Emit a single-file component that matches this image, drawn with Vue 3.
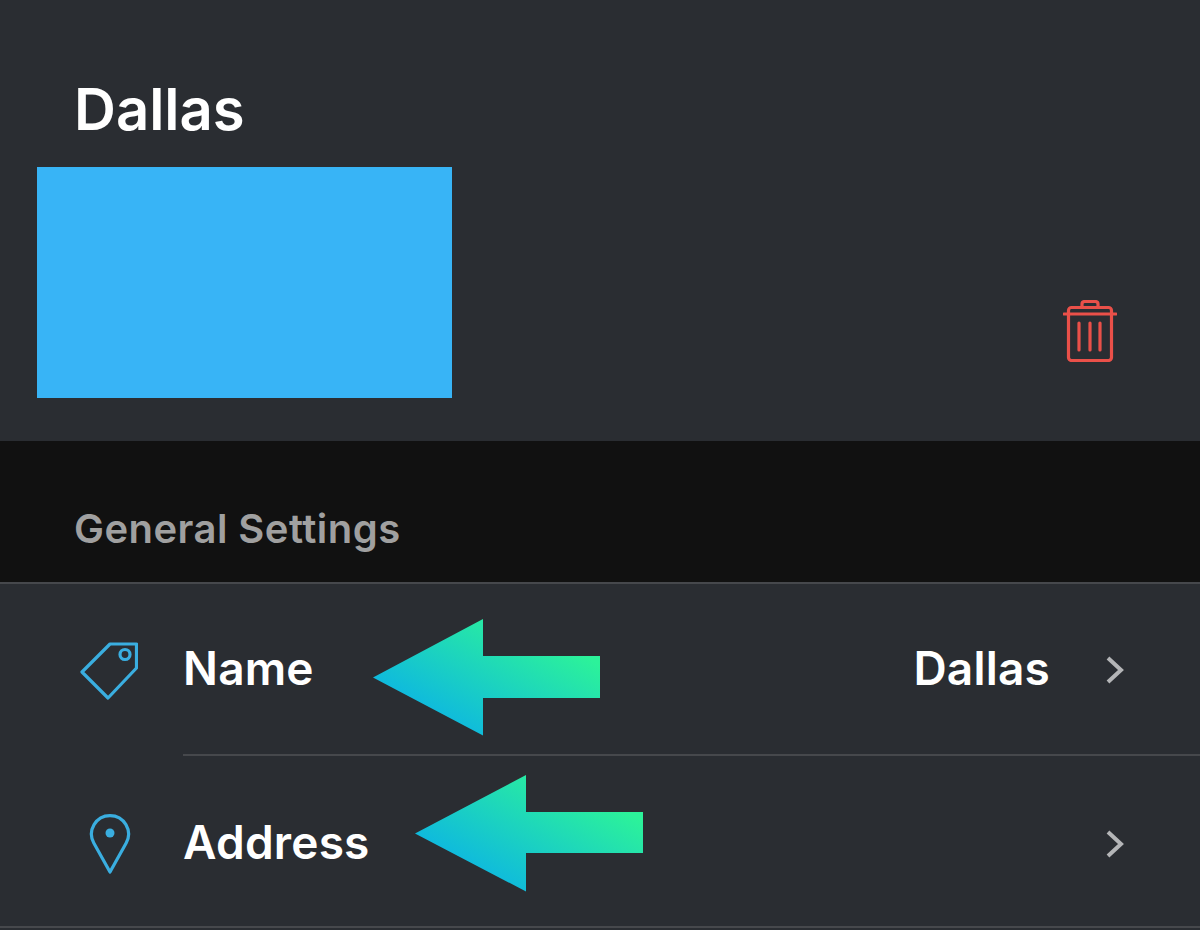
<script setup>
const rows = [
  { label: 'Name', value: 'Dallas', icon: 'tag' },
  { label: 'Address', value: '', icon: 'pin' },
]
</script>

<template>
  <div class="page">
    <header class="head">
      <h1 class="title">Dallas</h1>
      <div class="head-row">
        <div class="redact"></div>
        <svg class="trash" width="54" height="62" viewBox="0 0 54 62" fill="none" stroke="#ea5049" stroke-width="3.200" stroke-linecap="round" stroke-linejoin="round">
          <path d="M1 14H53" />
          <path d="M19 7V4Q19 1.500 22 1.500H32Q35 1.500 35 4V7" />
          <rect x="5.500" y="7.500" width="43" height="53" rx="3" />
          <path d="M16 23V50M27 23V50M37 23V50" />
        </svg>
      </div>
    </header>

    <div class="section-title">General Settings</div>

    <div class="list">
      <div v-for="row in rows" :key="row.label" class="row">
        <div class="icon-cell">
          <svg v-if="row.icon === 'tag'" width="58" height="58" viewBox="0 0 58 58" fill="none" stroke="#3aaee0" stroke-width="3.200" stroke-linejoin="round">
            <path d="M30 2H56.500V26L28 56L2 30Z" />
            <circle cx="45" cy="12.500" r="5" />
          </svg>
          <svg v-else width="42" height="62" viewBox="0 0 42 62" fill="none">
            <path d="M21 59L4.800 30A18.500 18.500 0 1 1 37.200 30Z" stroke="#3aaee0" stroke-width="3.200" stroke-linejoin="round" />
            <circle cx="21" cy="20" r="4.500" fill="#3aaee0" />
          </svg>
        </div>
        <div class="row-body">
          <span class="label">{{ row.label }}</span>
          <span class="value">{{ row.value }}</span>
          <svg class="chev" width="18" height="28" viewBox="0 0 18 28" fill="none" stroke="#b4b5b7" stroke-width="4">
            <path d="M2 2L15 14L2 26" />
          </svg>
        </div>
      </div>
    </div>

    <svg class="arrow arrow-a" width="228" height="117" viewBox="0 0 228 117">
      <defs>
        <linearGradient id="ga" gradientUnits="userSpaceOnUse" x1="200" y1="30" x2="130" y2="150">
          <stop offset="0" stop-color="#2cf29a" />
          <stop offset="1" stop-color="#0cb4e4" />
        </linearGradient>
      </defs>
      <path d="M0 58.500L110 0V37H227V79H110V116.500Z" fill="url(#ga)" />
    </svg>
    <svg class="arrow arrow-b" width="228" height="117" viewBox="0 0 228 117">
      <path d="M0 58.500L111 0V37H228V78H111V116.500Z" fill="url(#ga)" />
    </svg>
  </div>
</template>

<style>
html, body { margin: 0; background: #2a2d32; }
</style>

<style scoped>
.page {
  position: relative;
  width: 1200px;
  height: 930px;
  overflow: hidden;
  background: #2a2d32;
  font-family: Inter, "Noto Sans", sans-serif;
  color: #fff;
}
.head {
  height: 441px;
  box-sizing: border-box;
  padding: 72px 83px 0 37px;
}
.title {
  margin: 0 0 0 37px;
  height: 95px;
  font-size: 58px;
  line-height: 75px;
  font-weight: 600;
}
.head-row {
  display: flex;
  justify-content: space-between;
}
.redact {
  width: 415px;
  height: 231px;
  background: #38b4f6;
}
.trash { margin-top: 133px; }
.section-title {
  height: 143px;
  box-sizing: border-box;
  padding: 65px 0 0 74px;
  background: #111;
  color: #a0a0a0;
  font-size: 40px;
  line-height: 46px;
  font-weight: 600;
  letter-spacing: 0.45px;
  border-bottom: 2px solid #46484c;
}
.list { border-bottom: 2px solid #46484c; }
.row {
  display: flex;
  height: 172px;
  box-sizing: border-box;
  padding-top: 2px;
}
.row:last-child { height: 170px; padding-top: 6px; }
.icon-cell {
  width: 183px;
  flex: none;
  display: flex;
  align-items: center;
  padding-left: 80px;
  box-sizing: border-box;
}
.row:last-child .icon-cell { padding-left: 89px; }
.row-body {
  flex: 1;
  display: flex;
  align-items: center;
  padding-right: 76px;
  border-bottom: 2px solid #46484c;
  font-size: 46px;
  font-weight: 600;
  letter-spacing: 0.2px;
}
.row:last-child .row-body { border-bottom: 0; }
.label { flex: 1; margin-bottom: 4px; }
.value { margin: 0 56px 4px 0; }
.arrow { position: absolute; }
.arrow-a { left: 373px; top: 619px; }
.arrow-b { left: 415px; top: 775px; }
</style>
